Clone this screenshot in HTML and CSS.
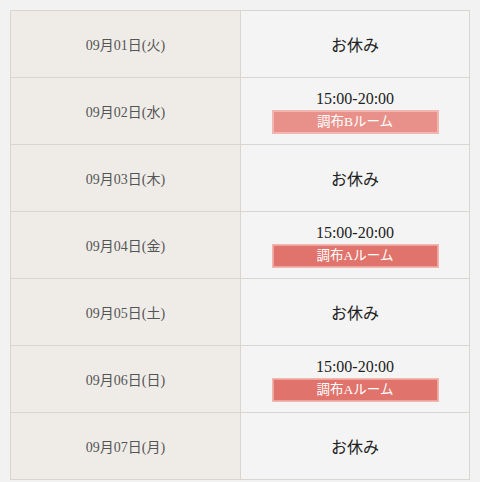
FILE: index.html
```html
<!DOCTYPE html>
<html>
<head>
  <meta charset="utf-8">
  <title>スケジュール</title>
  <link rel="stylesheet" href="styles.css">
</head>
<body>

  <table class="schedule">
    <tr>
      <th>09月01日(火)</th>
      <td><span class="off">お休み</span></td>
    </tr>
    <tr>
      <th>09月02日(水)</th>
      <td>
        <div class="time">15:00-20:00</div>
        <div class="room room-b">調布Bルーム</div>
      </td>
    </tr>
    <tr>
      <th>09月03日(木)</th>
      <td><span class="off">お休み</span></td>
    </tr>
    <tr>
      <th>09月04日(金)</th>
      <td>
        <div class="time">15:00-20:00</div>
        <div class="room room-a">調布Aルーム</div>
      </td>
    </tr>
    <tr>
      <th>09月05日(土)</th>
      <td><span class="off">お休み</span></td>
    </tr>
    <tr>
      <th>09月06日(日)</th>
      <td>
        <div class="time">15:00-20:00</div>
        <div class="room room-a">調布Aルーム</div>
      </td>
    </tr>
    <tr>
      <th>09月07日(月)</th>
      <td><span class="off">お休み</span></td>
    </tr>
  </table>

</body>
</html>
```

FILE: styles.css
```css
body {
  margin: 0;
  padding: 10px;
  background-color: #f2f2f2;
  font-family: "Liberation Serif", "Noto Sans CJK JP", serif;
}

.schedule {
  width: 460px;
  border-collapse: collapse;
  border: 1px solid #d9d6d1;
}

.schedule th,
.schedule td {
  height: 66px;
  padding: 0;
  border: 1px solid #d9d6d1;
  text-align: center;
  vertical-align: middle;
}

.schedule th {
  width: 229px;
  background-color: #efece8;
  color: #555;
  font-size: 14px;
  font-weight: normal;
}

.schedule td {
  background-color: #f4f4f4;
  color: #222;
}

.off {
  font-size: 16px;
}

.time {
  font-size: 16px;
  line-height: 20px;
}

.room {
  width: 165px;
  margin: 1px auto 0;
  line-height: 22px;
  color: #fff;
  font-size: 13.5px;
  border: 1px solid #f2b6ae;
  box-shadow: inset 0 0 0 1px rgba(255, 255, 255, 0.35);
}

.room-a {
  background-color: #e0736b;
}

.room-b {
  background-color: #e8918a;
}
```
